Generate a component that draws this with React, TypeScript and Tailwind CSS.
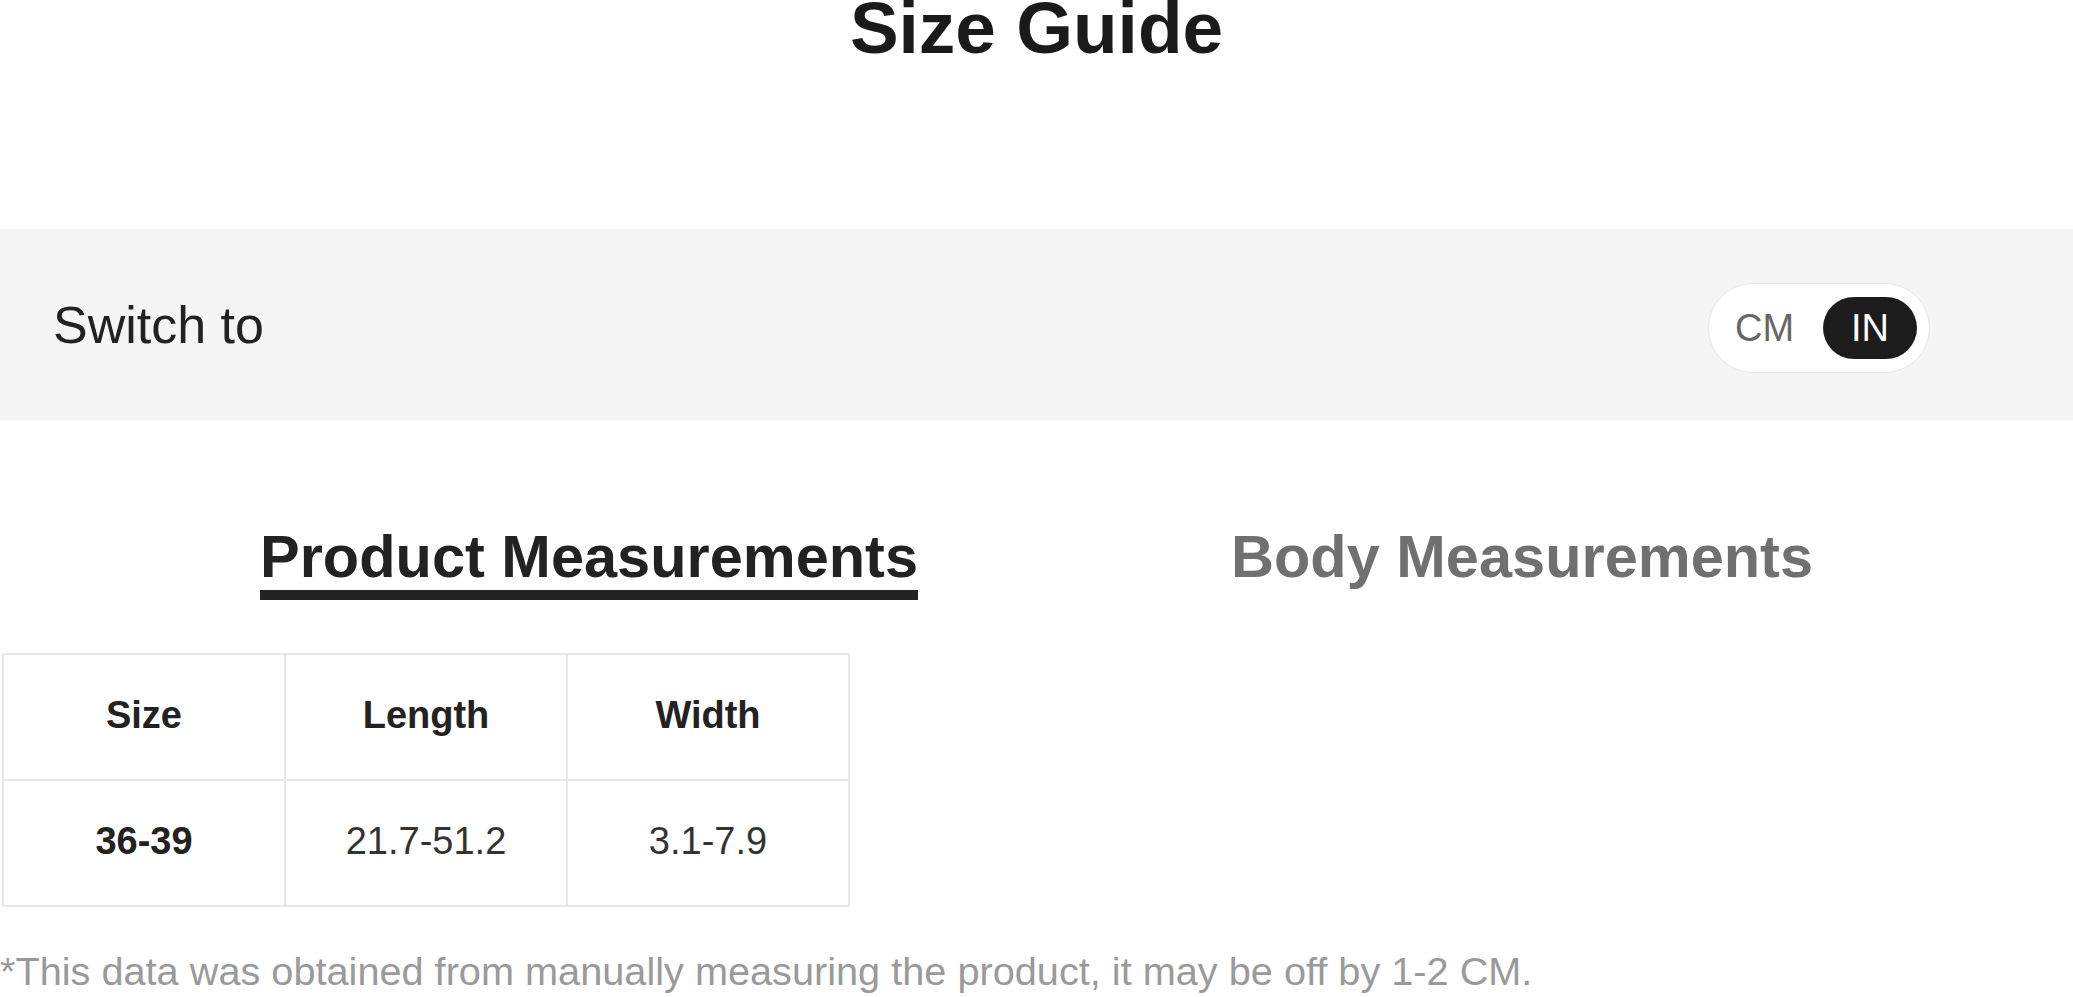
import React from "react";

export default function App() {
  const font = { fontFamily: '"Liberation Sans", Arial, sans-serif' };
  return (
    <div className="w-full bg-white text-[#222]" style={font}>
      <h1 className="-mt-[8px] text-center text-[73px] font-bold leading-[72px] text-[#1a1a1a]">
        Size Guide
      </h1>

      <div className="mt-[165px] flex h-[192px] items-center justify-between bg-[#f5f5f5] pl-[53px] pr-[143px]">
        <span className="text-[52px] leading-none text-[#222]">Switch to</span>
        <div className="mt-[6px] flex h-[90px] w-[222px] items-center justify-between rounded-full border border-[#e8e8e8] bg-white pl-[26px] pr-[12px]">
          <span className="text-[38px] leading-none text-[#666]">CM</span>
          <span className="flex h-[62px] w-[94px] items-center justify-center rounded-full bg-[#1c1c1c] text-[38px] leading-none text-white">
            IN
          </span>
        </div>
      </div>

      <div className="mt-[103px] flex justify-center gap-[313px]">
        <div className="border-b-[10px] border-[#222] text-[59.5px] font-bold leading-[66px] text-[#222]">
          Product Measurements
        </div>
        <div className="border-b-[10px] border-transparent text-[59.5px] font-bold leading-[66px] text-[#707070]">
          Body Measurements
        </div>
      </div>

      <table className="ml-[2px] mt-[53px] border-collapse text-[38px] leading-[40px]">
        <tbody>
          <tr>
            <td className="h-[126px] w-[282px] border-2 border-[#e8e8e8] pb-[4px] text-center font-bold text-[#222]">Size</td>
            <td className="h-[126px] w-[282px] border-2 border-[#e8e8e8] pb-[4px] text-center font-bold text-[#222]">Length</td>
            <td className="h-[126px] w-[282px] border-2 border-[#e8e8e8] pb-[4px] text-center font-bold text-[#222]">Width</td>
          </tr>
          <tr>
            <td className="h-[126px] w-[282px] border-2 border-[#e8e8e8] pb-[4px] text-center font-bold text-[#222]">36-39</td>
            <td className="h-[126px] w-[282px] border-2 border-[#e8e8e8] pb-[4px] text-center text-[#333]">21.7-51.2</td>
            <td className="h-[126px] w-[282px] border-2 border-[#e8e8e8] pb-[4px] text-center text-[#333]">3.1-7.9</td>
          </tr>
        </tbody>
      </table>

      <p className="mt-[41px] text-[39.7px] leading-[46px] text-[#9a9a9a]">
        *This data was obtained from manually measuring the product, it may be off by 1-2 CM.
      </p>
    </div>
  );
}
